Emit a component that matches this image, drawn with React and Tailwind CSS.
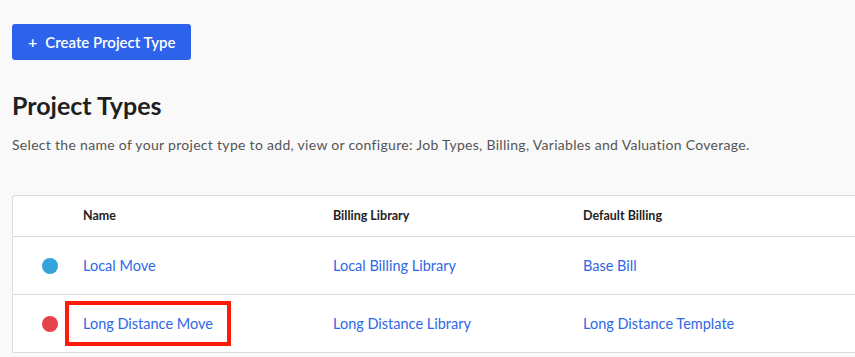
import React from 'react';

const rows = [
  { dot: 'bg-[#34a3dc]', name: 'Local Move', library: 'Local Billing Library', billing: 'Base Bill' },
  { dot: 'bg-[#e6424b]', name: 'Long Distance Move', library: 'Long Distance Library', billing: 'Long Distance Template', highlight: true },
];

export default function App() {
  return (
    <div className="min-h-screen bg-[#f9f9f9] pl-3 pt-6 font-['Lato','Noto_Sans',sans-serif] text-[#222] overflow-hidden">
      <button className="flex h-9 w-[179px] items-center gap-2 rounded-[3px] bg-[#2d63ea] pl-4 text-[15px] font-semibold text-white">
        <span className="text-[16px] leading-none">+</span>
        <span>Create Project Type</span>
      </button>

      <h1 className="mt-[30px] text-[25px] font-bold leading-[30px] text-[#1f1f1f]">Project Types</h1>
      <p className="mt-[16px] text-[14px] tracking-[0.3px] leading-[18px] text-[#555]">
        Select the name of your project type to add, view or configure: Job Types, Billing, Variables and Valuation Coverage.
      </p>

      {/* Table */}
      <div className="mt-[41px] w-[900px] rounded-tl-[3px] border-l border-t border-[#dcdcdc] bg-white">
        <div className="grid h-[41px] grid-cols-[70px_250px_250px_1fr] items-center border-b border-[#dcdcdc] text-[12.5px] font-bold text-[#222]">
          <div />
          <div>Name</div>
          <div>Billing Library</div>
          <div>Default Billing</div>
        </div>
        {rows.map((r) => (
          <div
            key={r.name}
            className="grid h-[58px] grid-cols-[70px_250px_250px_1fr] items-center border-b border-[#dcdcdc] text-[14.5px] text-[#2f68e6]"
          >
            <div className="flex justify-center pl-[3px]">
              <span className={`block h-4 w-4 rounded-full ${r.dot}`} />
            </div>
            <div className="relative">
              <span>{r.name}</span>
              {r.highlight && (
                <span className="absolute left-[-18px] top-[-12px] h-[45px] w-[166px] border-4 border-[#ff1a0a]" />
              )}
            </div>
            <div>{r.library}</div>
            <div>{r.billing}</div>
          </div>
        ))}
      </div>
    </div>
  );
}
